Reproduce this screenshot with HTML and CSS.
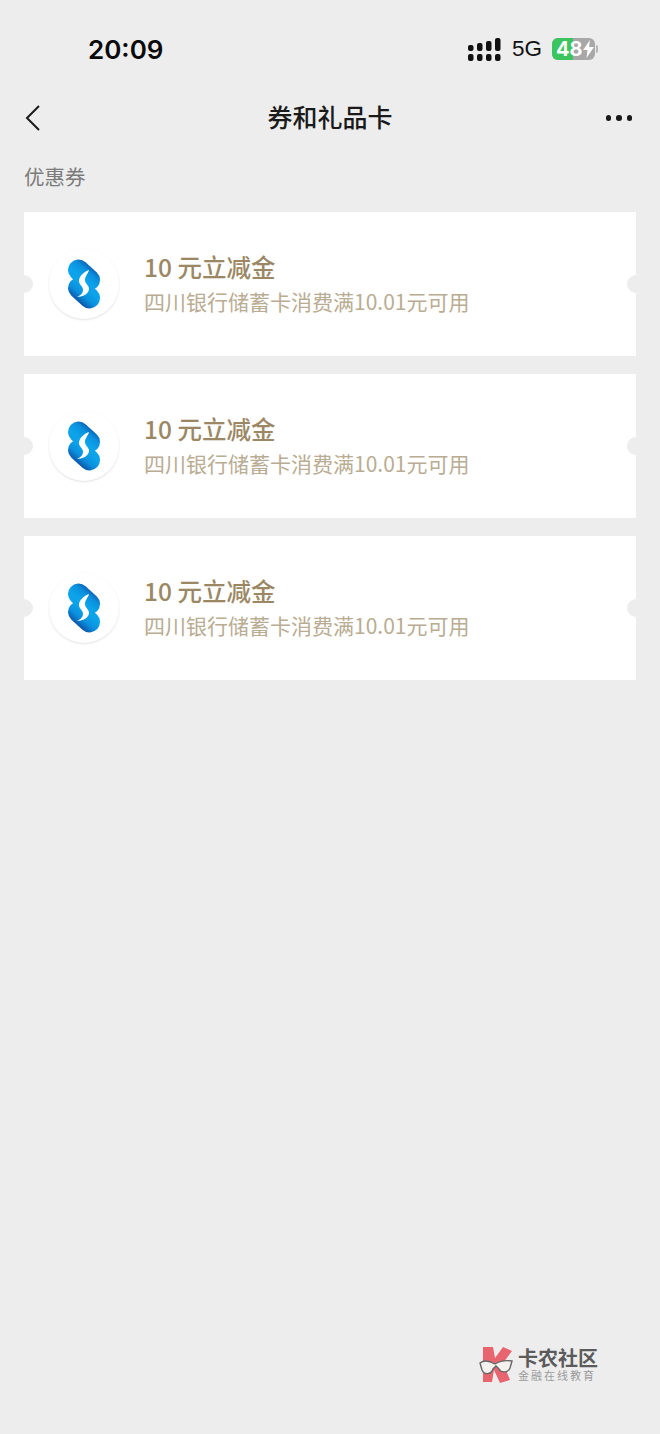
FILE: index.html
```html
<!DOCTYPE html>
<html lang="zh-CN">
<head>
    <meta charset="UTF-8">
    <title>券和礼品卡</title>
    <link rel="stylesheet" href="styles.css">
</head>
<body>
    <div class="page">
        <!-- Status bar -->
        <div class="status-bar">
            <span class="time">20:09</span>
            <div class="status-icons">
                <svg class="signal" width="33" height="23" viewBox="0 0 33 23" fill="#111">
                    <rect x="0" y="7" width="5.5" height="6" rx="2"/>
                    <rect x="0" y="16" width="5.5" height="7" rx="2"/>
                    <rect x="9" y="5" width="5.5" height="8" rx="2"/>
                    <rect x="9" y="16" width="5.5" height="7" rx="2"/>
                    <rect x="18" y="3" width="5.5" height="10" rx="2"/>
                    <rect x="18" y="16" width="5.5" height="7" rx="2"/>
                    <rect x="27" y="0" width="5.5" height="13" rx="2"/>
                    <rect x="27" y="16" width="5.5" height="7" rx="2"/>
                </svg>
                <span class="network">5G</span>
                <div class="battery">
                    <div class="battery-level"></div>
                    <span class="battery-text">48</span>
                    <svg class="battery-bolt" width="11" height="18" viewBox="0 0 11 18" fill="#fff">
                        <path d="M7 0 L0 10 H4.5 L3.5 18 L11 7 H6 Z"/>
                    </svg>
                </div>
                <div class="battery-nub"></div>
            </div>
        </div>

        <!-- Title bar -->
        <div class="nav-bar">
            <svg class="back" width="16" height="26" viewBox="0 0 16 26" fill="none" stroke="#1a1a1a" stroke-width="2">
                <path d="M14 1 L2 13 L14 25"/>
            </svg>
            <h1>券和礼品卡</h1>
            <div class="more"><i></i><i></i><i></i></div>
        </div>

        <div class="section-title">优惠券</div>

        <div class="coupon-list">
            <div class="coupon">
                <div class="coupon-logo">
                    <svg width="34" height="52" viewBox="0 0 34 52">
                        <use href="#bankMark"/>
                    </svg>
                </div>
                <div class="coupon-info">
                    <div class="coupon-name">10 元立减金</div>
                    <div class="coupon-desc">四川银行储蓄卡消费满10.01元可用</div>
                </div>
            </div>
            <div class="coupon">
                <div class="coupon-logo">
                    <svg width="34" height="52" viewBox="0 0 34 52">
                        <use href="#bankMark"/>
                    </svg>
                </div>
                <div class="coupon-info">
                    <div class="coupon-name">10 元立减金</div>
                    <div class="coupon-desc">四川银行储蓄卡消费满10.01元可用</div>
                </div>
            </div>
            <div class="coupon">
                <div class="coupon-logo">
                    <svg width="34" height="52" viewBox="0 0 34 52">
                        <use href="#bankMark"/>
                    </svg>
                </div>
                <div class="coupon-info">
                    <div class="coupon-name">10 元立减金</div>
                    <div class="coupon-desc">四川银行储蓄卡消费满10.01元可用</div>
                </div>
            </div>
        </div>

        <!-- Watermark -->
        <div class="watermark">
            <svg width="34" height="37" viewBox="0 0 34 37">
                <path d="M4 1 H14 L16 12 L24 1 L33 5 L24 17 L31 34 L21 37 L15 24 L13 36 H4 Z" fill="#e8656f"/>
                <path d="M1 17 C6 13 11 15 16 18 C21 15 26 14 33 15 L31 22 C29 27 22 27 20 23 L17 20 L14 23 C12 29 5 29 3 24 Z" fill="#f4f1ee" stroke="#666" stroke-width="1.4"/>
            </svg>
            <div class="watermark-text">
                <div class="watermark-name">卡农社区</div>
                <div class="watermark-sub">金融在线教育</div>
            </div>
        </div>
    </div>

    <!-- Bank logo, shared by the coupons -->
    <svg class="defs" width="0" height="0">
        <defs>
            <linearGradient id="bandA" gradientUnits="userSpaceOnUse" x1="24" y1="6" x2="14" y2="18">
                <stop offset="0" stop-color="#0a55a8"/>
                <stop offset="0.5" stop-color="#0b90de"/>
                <stop offset="1" stop-color="#0ca3ea"/>
            </linearGradient>
            <linearGradient id="bandB" gradientUnits="userSpaceOnUse" x1="11" y1="44" x2="21" y2="32">
                <stop offset="0" stop-color="#0a55a8"/>
                <stop offset="0.5" stop-color="#0b90de"/>
                <stop offset="1" stop-color="#0ca3ea"/>
            </linearGradient>
            <symbol id="bankMark" viewBox="0 0 34 52">
                <path d="M11.5 12 L22.5 22" fill="none" stroke="url(#bandA)" stroke-width="21" stroke-linecap="round"/>
                <path d="M11.5 30 L22.5 40" fill="none" stroke="url(#bandB)" stroke-width="21" stroke-linecap="round"/>
                <path d="M22 12 C17 14 12 18 12 23 C12 27 16 28 16 32 C16 35 14 37 10 39 C15 39 22 36 22 31 C22 27 18 26 18 22 C18 18 21 16 22 12 Z" fill="#fff"/>
            </symbol>
        </defs>
    </svg>
</body>
</html>
```

FILE: styles.css
```css
body {
    margin: 0;
    background: #ededed;
    font-family: "Noto Sans CJK SC", "Noto Sans", sans-serif;
}

.page {
    display: flex;
    flex-direction: column;
    height: 1434px;
    overflow: hidden;
}

/* Status bar */
.status-bar {
    display: flex;
    align-items: center;
    justify-content: space-between;
    height: 40px;
    margin-top: 29px;
    padding: 0 62px 0 88px;
}
.time {
    font-family: Inter, sans-serif;
    font-size: 26px;
    font-weight: 600;
    color: #0a0a0a;
}
.status-icons {
    display: flex;
    align-items: center;
}
.signal {
    margin-right: 11px;
}
.network {
    font-family: "Liberation Sans", sans-serif;
    font-size: 22.5px;
    color: #111;
    margin-right: 10px;
}
.battery {
    position: relative;
    display: flex;
    align-items: center;
    width: 43px;
    height: 22px;
    border-radius: 6px;
    background: #a8a8a8;
}
.battery-nub {
    width: 2px;
    height: 8px;
    margin-left: 1px;
    border-radius: 0 2px 2px 0;
    background: #b5b5b5;
}
.battery-level {
    position: absolute;
    left: 0;
    top: 0;
    bottom: 0;
    width: 21px;
    border-radius: 6px 0 0 6px;
    background: #3cc45f;
}
.battery-text {
    position: relative;
    margin-left: 4px;
    font-family: Inter, sans-serif;
    font-size: 20px;
    font-weight: 700;
    line-height: 22px;
    color: #fff;
}
.battery-bolt {
    position: relative;
}

/* Title bar */
.nav-bar {
    display: grid;
    grid-template-columns: 1fr auto 1fr;
    align-items: center;
    height: 40px;
    margin-top: 29px;
    padding: 0 28px;
}
.back {
    margin-left: -3px;
}
.nav-bar h1 {
    margin: 0;
    padding-bottom: 4px;
    font-size: 25px;
    font-weight: 500;
    color: #1a1a1a;
}
.more {
    display: flex;
    justify-content: flex-end;
    gap: 5px;
}
.more i {
    width: 5.5px;
    height: 5.5px;
    border-radius: 50%;
    background: #1a1a1a;
}

.section-title {
    margin: 23px 0 0 24px;
    height: 30px;
    font-size: 20.5px;
    line-height: 30px;
    color: #7b7b7b;
}

/* Coupons */
.coupon-list {
    display: flex;
    flex-direction: column;
    gap: 18px;
    margin: 21px 24px 0;
}
.coupon {
    position: relative;
    display: flex;
    align-items: center;
    height: 144px;
    background: #fff;
    overflow: hidden;
}
.coupon::before,
.coupon::after {
    content: "";
    position: absolute;
    top: 63px;
    width: 18px;
    height: 18px;
    border-radius: 50%;
    background: #ededed;
}
.coupon::before {
    left: -9px;
}
.coupon::after {
    right: -9px;
}
.coupon-logo {
    display: flex;
    align-items: center;
    justify-content: center;
    flex-shrink: 0;
    width: 70px;
    height: 70px;
    margin-left: 25px;
    border-radius: 50%;
    box-shadow: 0 1px 2px rgba(90, 70, 90, 0.16);
}
.coupon-info {
    margin: 0 0 2px 25px;
}
.coupon-name {
    padding-bottom: 2px;
    font-size: 24.5px;
    font-weight: 500;
    line-height: 34px;
    color: #9b8764;
}
.coupon-desc {
    font-size: 21px;
    line-height: 30px;
    color: #b9ac93;
}

.defs {
    position: absolute;
}

/* Watermark */
.watermark {
    display: flex;
    align-items: center;
    gap: 5px;
    margin: auto 62px 51px auto;
}
.watermark-name {
    font-size: 20px;
    font-weight: 700;
    line-height: 20px;
    color: #5b5b5b;
}
.watermark-sub {
    font-size: 11px;
    letter-spacing: 2px;
    line-height: 14px;
    color: #9a9a9a;
}
```
